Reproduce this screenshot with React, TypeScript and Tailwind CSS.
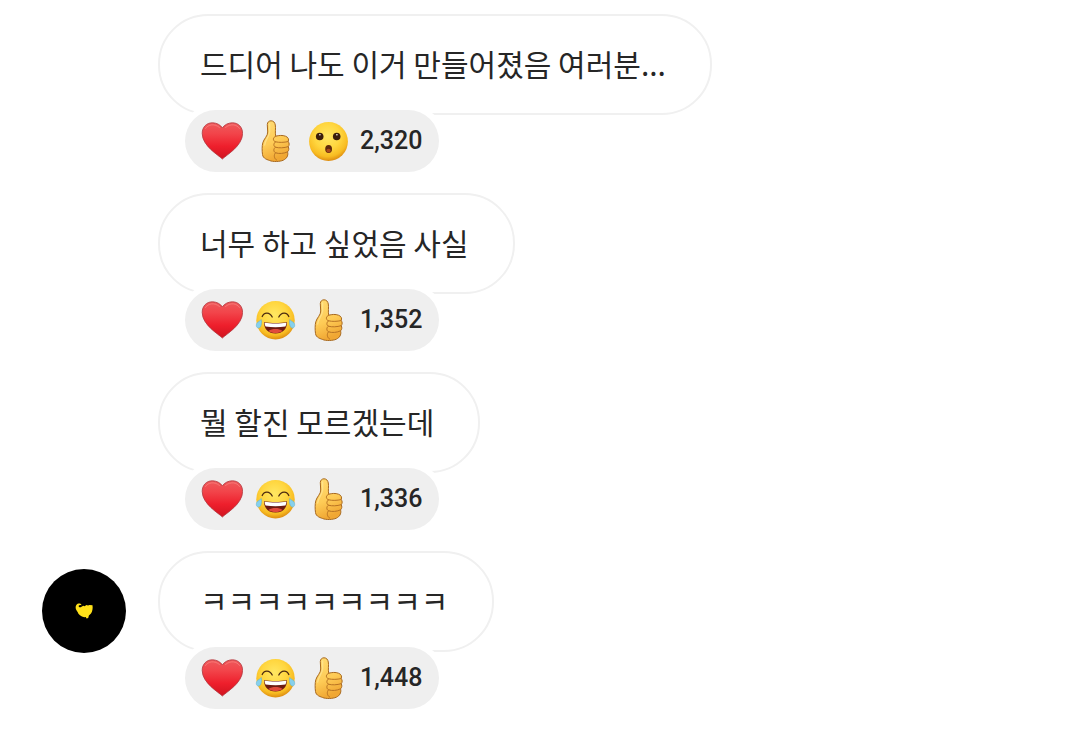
import React from "react";

type Reaction = "heart" | "thumb" | "joy" | "wow";

type Message = {
  text: string;
  reactions: Reaction[];
  count: string;
};

const messages: Message[] = [
  { text: "드디어 나도 이거 만들어졌음 여러분...", reactions: ["heart", "thumb", "wow"], count: "2,320" },
  { text: "너무 하고 싶었음 사실", reactions: ["heart", "joy", "thumb"], count: "1,352" },
  { text: "뭘 할진 모르겠는데", reactions: ["heart", "joy", "thumb"], count: "1,336" },
  { text: "ㅋㅋㅋㅋㅋㅋㅋㅋㅋ", reactions: ["heart", "joy", "thumb"], count: "1,448" },
];

function EmojiGradients() {
  return (
    <svg className="absolute size-0" aria-hidden="true">
      <defs>
        <linearGradient id="heart-fill" x1="0" y1="0" x2="0" y2="1">
          <stop offset="0" stopColor="#ee5a5c" />
          <stop offset="0.3" stopColor="#f2444a" />
          <stop offset="0.65" stopColor="#ee1f2c" />
          <stop offset="1" stopColor="#d0131f" />
        </linearGradient>
        <radialGradient id="face-fill" cx="0.47" cy="0.36" r="0.66">
          <stop offset="0" stopColor="#ffe763" />
          <stop offset="0.5" stopColor="#ffd63f" />
          <stop offset="0.8" stopColor="#f8bc22" />
          <stop offset="1" stopColor="#d9850f" />
        </radialGradient>
        <linearGradient id="hand-fill" x1="0" y1="0" x2="0.3" y2="1">
          <stop offset="0" stopColor="#ffdc74" />
          <stop offset="0.6" stopColor="#fecb56" />
          <stop offset="1" stopColor="#f0a733" />
        </linearGradient>
      </defs>
    </svg>
  );
}

function Heart() {
  return (
    <svg viewBox="0 0 42 42" className="size-[42px]" role="img" aria-label="하트">
      <path
        d="M21.4 39C17.8 35.4 1.2 26 1.2 13.4C1.2 7 5.6 2.8 11.2 2.800C15.800 2.800 19.600 5 21.400 8C23.200 5 27 2.800 31.600 2.800C37.200 2.800 41.600 7 41.600 13.400C41.600 26 25 35.400 21.400 39Z"
        fill="url(#heart-fill)"
        stroke="#b03a40"
        strokeWidth="0.8"
      />
      <path
        d="M4.5 8.500C7 4.300 13.500 3.200 18.500 7.500M24.500 7.500C29.500 3.200 36 4.300 38.500 8.500"
        fill="none"
        stroke="#ff9f99"
        strokeWidth="1"
        strokeLinecap="round"
        opacity="0.45"
      />
    </svg>
  );
}

function Thumb() {
  return (
    <svg viewBox="0 0 42 42" className="size-[42px]" role="img" aria-label="좋아요">
      <path
        d="M13.300 4.600C13.300 2.200 15 0.800 17 0.800C19.500 0.800 20.900 2.600 21.300 5C21.900 8.600 20.900 12 21.700 16.200C25 15.400 28.500 15 31.500 16.200C34.300 17.200 35.200 19.400 34.100 21.600C35.500 22.900 35.500 25.200 34.200 26.700C35.200 28.300 35 30.500 33.500 31.900C34.400 34.200 33.500 37.800 30.500 39.500C28 41.500 21 42 17 41C13.500 39.700 9 38.800 8.500 34.500C8 31 7.900 26 8.800 22.800C9.800 18.800 13.900 16 13.700 12Z"
        fill="url(#hand-fill)"
        stroke="#a8691f"
        strokeWidth="1"
        strokeLinejoin="round"
      />
      <path
        d="M21.700 16.200C18.800 17.300 18.400 20.700 21.500 21.800C25.500 22.700 30 22.500 34.100 21.600M21.500 21.800C19.300 23.300 19.400 26 21.300 27.200C25 28.200 30 28 34.200 26.700M21.300 27.200C19.200 28.700 19.400 31.600 21.500 32.800C25 34 30 33.600 33.500 31.900M21.500 32.800C19.500 35 20 38.500 22.500 40"
        fill="none"
        stroke="#b87323"
        strokeWidth="1"
        strokeLinecap="round"
      />
      <path
        d="M15.600 4V12C15 17 11 20 10.700 25"
        fill="none"
        stroke="#fff0ac"
        strokeWidth="1.400"
        strokeLinecap="round"
        opacity="0.5"
      />
    </svg>
  );
}

function Wow() {
  return (
    <svg viewBox="0 0 42 42" className="size-[42px]" role="img" aria-label="놀람">
      <circle cx="21.500" cy="21.500" r="19.400" fill="url(#face-fill)" />
      <circle cx="12.700" cy="16.500" r="3.800" fill="#3b1d0b" />
      <circle cx="29.700" cy="16.500" r="3.800" fill="#3b1d0b" />
      <circle cx="12.900" cy="14.800" r="0.800" fill="#fff" />
      <circle cx="29.900" cy="14.800" r="0.800" fill="#fff" />
      <ellipse cx="21.600" cy="29" rx="3.400" ry="4" fill="#5f280c" />
      <ellipse cx="21.600" cy="30.600" rx="2.200" ry="1.900" fill="#a8481f" />
    </svg>
  );
}

function Joy() {
  return (
    <svg viewBox="0 0 42 42" className="size-[42px]" role="img" aria-label="웃음">
      <circle cx="21.500" cy="21.200" r="19.200" fill="url(#face-fill)" />
      <path
        d="M8.200 17.500C10 12.800 15.800 12.800 18.200 18M24.800 18C27.200 12.800 33 12.800 34.800 17.500"
        fill="none"
        stroke="#4d2b10"
        strokeWidth="1.300"
        strokeLinecap="round"
      />
      <path
        d="M10 23.300C17 24.300 26 24.300 33 23.300C33 30.500 28.500 34.600 21.500 34.600C14.500 34.600 10 30.500 10 23.300Z"
        fill="#6d1c12"
      />
      <path
        d="M10.600 23.800C17 24.800 26 24.800 32.400 23.800C32.300 25.600 31.900 26.600 31.400 27.600C25 28.300 18 28.300 11.600 27.600C11.100 26.600 10.700 25.600 10.600 23.800Z"
        fill="#fff"
      />
      <path d="M14.500 32C18 29.400 25 29.400 28.500 32C24.500 34.700 18.500 34.700 14.500 32Z" fill="#e04a3c" />
      <path
        d="M7.300 20.500C8 24 7.200 29 4.500 29C2 29 1.600 25.600 3.400 23.600C4.600 22.300 6.400 22 7.300 20.500Z"
        fill="#86d0ec"
        stroke="#5aaed0"
        strokeWidth="0.500"
      />
      <path
        d="M35.700 20.500C35 24 35.800 29 38.500 29C41 29 41.400 25.600 39.600 23.600C38.400 22.300 36.600 22 35.700 20.500Z"
        fill="#86d0ec"
        stroke="#5aaed0"
        strokeWidth="0.500"
      />
    </svg>
  );
}

const emojis: Record<Reaction, () => React.JSX.Element> = {
  heart: Heart,
  thumb: Thumb,
  joy: Joy,
  wow: Wow,
};

function Avatar() {
  return (
    <div className="flex size-[84px] items-center justify-center rounded-full bg-black">
      <svg viewBox="0 0 18 16" className="h-4 w-[18px]" role="img" aria-label="프로필">
        <path
          d="M3.6 0.500C5 0.200 6.400 0.900 6.500 2.200L5.300 2C4 1.900 3.500 2.700 3.800 3.700C4.500 4.600 5.700 4.500 6.500 3.700L8.200 2.700L9.500 3.200L11.500 2L13 2.500L14.500 1.900L17.500 2.200C17.900 5 17.600 8.200 16 10.400L13.900 12.500L13.200 15L11.600 15.500L10.700 14L9.300 14.200C6 13.300 3.200 11.600 2.600 8.900C1.100 7.400 0.400 5.500 0.700 3.600C1 1.900 2.200 0.800 3.600 0.500Z"
          fill="#ffe11a"
        />
      </svg>
    </div>
  );
}

function MessageItem({ text, reactions, count }: Message) {
  return (
    <li className="flex flex-col items-start">
      <p className="flex h-[101px] items-center rounded-[50px] border-2 border-[#f0f0f0] pr-11 pb-1 pl-10 text-[30px] leading-10 text-[#262626]">
        {text}
      </p>
      <button
        type="button"
        className="relative -mt-[5px] ml-[27px] flex h-[62px] items-center gap-[11px] rounded-full bg-[#efefef] pr-[17px] pl-4 ring-6 ring-white"
      >
        {reactions.map((name) => {
          const Emoji = emojis[name];
          return <Emoji key={name} />;
        })}
        <span className="font-['Roboto',sans-serif] text-[25px] leading-8 font-medium text-[#262626]">{count}</span>
      </button>
    </li>
  );
}

export default function App() {
  return (
    <main className="flex min-h-screen items-end gap-8 bg-white px-[42px] pt-[14px] pb-[25px] font-['Noto_Sans_CJK_KR',sans-serif]">
      <EmojiGradients />
      <div className="mb-14 shrink-0">
        <Avatar />
      </div>
      <ul className="flex min-w-0 flex-1 flex-col gap-[21px]">
        {messages.map((message) => (
          <MessageItem key={message.text} {...message} />
        ))}
      </ul>
    </main>
  );
}
